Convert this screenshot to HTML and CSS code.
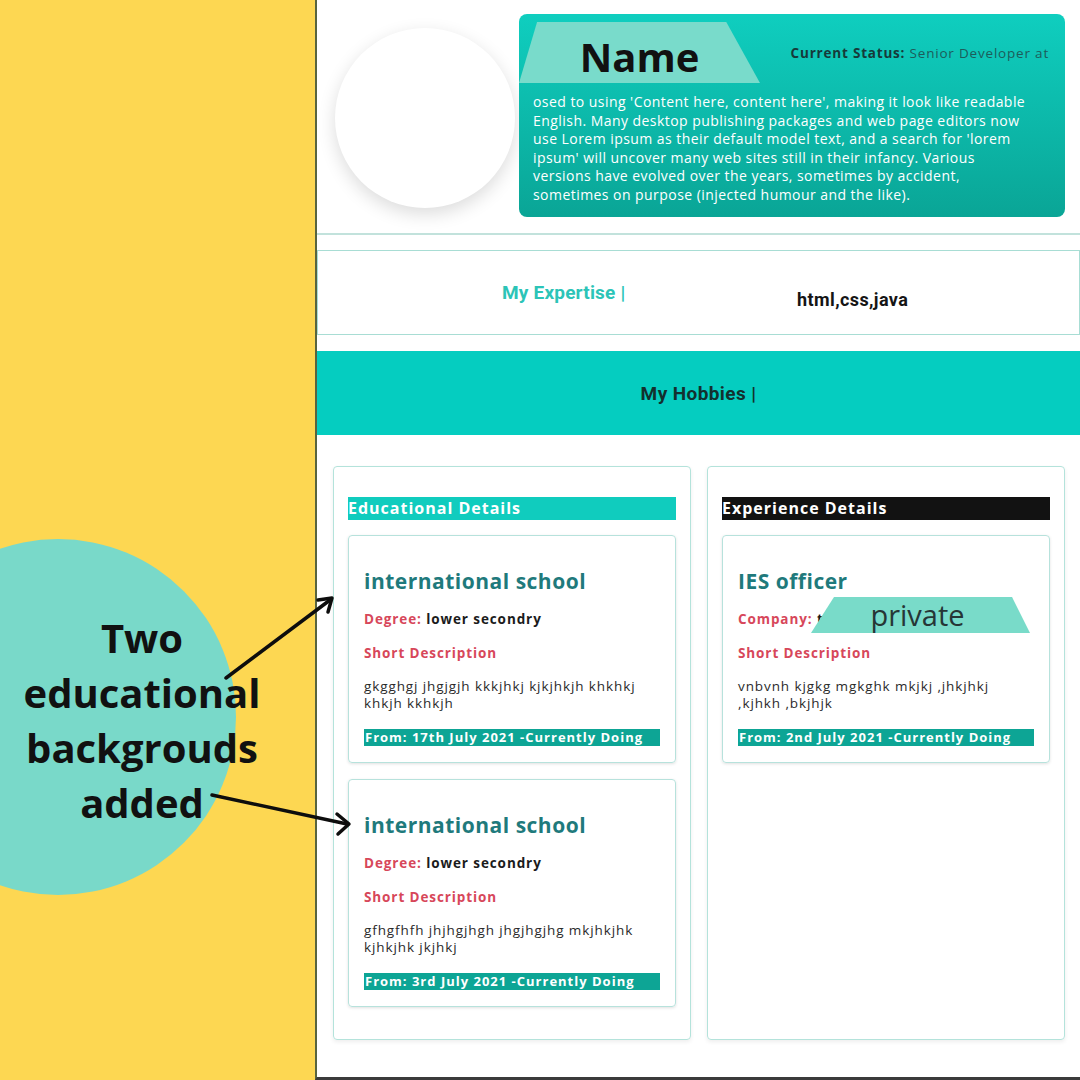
FILE: index.html
```html
<!DOCTYPE html>
<html lang="en">
<head>
<meta charset="utf-8">
<title>Resume</title>
<link rel="stylesheet" href="styles.css">
</head>
<body>
<div class="frame">
  <aside class="side"></aside>
  <main class="page">
    <section class="top">
      <div class="avatar"></div>
      <div class="intro">
        <div class="status-row"><span class="status"><b>Current Status:</b> Senior Developer at</span></div>
        <p class="about">osed to using 'Content here, content here', making it look like readable<br>English. Many desktop publishing packages and web page editors now<br>use Lorem ipsum as their default model text, and a search for 'lorem<br>ipsum' will uncover many web sites still in their infancy. Various<br>versions have evolved over the years, sometimes by accident,<br>sometimes on purpose (injected humour and the like).</p>
        <div class="name-tag">Name</div>
      </div>
    </section>
    <section class="expertise">
      <span class="exp-label">My Expertise |</span>
      <span class="exp-value">html,css,java</span>
    </section>
    <section class="hobbies">My Hobbies |</section>
    <section class="details">
      <div class="col">
        <h2 class="col-head">Educational Details</h2>
        <div class="item">
          <h3 class="item-title">international school</h3>
          <p class="line"><span class="lbl">Degree:</span> <b>lower secondry</b></p>
          <p class="line lbl">Short Description</p>
          <p class="desc">gkgghgj jhgjgjh kkkjhkj kjkjhkjh khkhkj<br>khkjh kkhkjh</p>
          <p class="date">From: 17th July 2021 -Currently Doing</p>
        </div>
        <div class="item item-next">
          <h3 class="item-title">international school</h3>
          <p class="line"><span class="lbl">Degree:</span> <b>lower secondry</b></p>
          <p class="line lbl">Short Description</p>
          <p class="desc">gfhgfhfh jhjhgjhgh jhgjhgjhg mkjhkjhk<br>kjhkjhk jkjhkj</p>
          <p class="date">From: 3rd July 2021 -Currently Doing</p>
        </div>
      </div>
      <div class="col">
        <h2 class="col-head exp-head">Experience Details</h2>
        <div class="item">
          <h3 class="item-title">IES officer</h3>
          <p class="line"><span class="lbl">Company:</span> <b>tcs private</b></p>
          <p class="line lbl">Short Description</p>
          <p class="desc">vnbvnh kjgkg mgkghk mkjkj ,jhkjhkj<br>,kjhkh ,bkjhjk</p>
          <p class="date">From: 2nd July 2021 -Currently Doing</p>
          <div class="private-tag">private</div>
        </div>
      </div>
    </section>
  </main>

  <div class="callout-circle"></div>
  <div class="callout-text">Two<br>educational<br>backgrouds<br>added</div>
  <svg class="arrows" width="1080" height="1080" viewBox="0 0 1080 1080">
    <g fill="none" stroke="#0d0d0d" stroke-width="3.5" stroke-linecap="round" stroke-linejoin="round">
      <line x1="226" y1="678" x2="330" y2="600"/>
      <polyline points="318,600 332,598 328,612"/>
      <line x1="212" y1="795" x2="347" y2="824"/>
      <polyline points="337,814 349,824 338,834"/>
    </g>
  </svg>
</div>
</body>
</html>
```

FILE: styles.css
```css
* { box-sizing: border-box; margin: 0; padding: 0; }

body {
  width: 1080px;
  height: 1080px;
  overflow: hidden;
  background: #ffffff;
  font-family: "Open Sans", "Noto Sans", sans-serif;
  color: #1d1d1d;
}

.frame {
  position: relative;
  display: flex;
  height: 1080px;
}

.side {
  width: 315px;
  flex: none;
  background: #fdd752;
}

.page {
  flex: 1;
  display: flex;
  flex-direction: column;
  border-left: 2px solid #58643f;
  border-bottom: 3px solid #3b3b3b;
  background: #ffffff;
}

/* top */
.top {
  height: 235px;
  flex: none;
  display: flex;
  align-items: flex-start;
  gap: 4px;
  padding: 14px 15px 0 18px;
  border-bottom: 2px solid #c2e2dc;
}

.avatar {
  width: 180px;
  height: 180px;
  flex: none;
  margin-top: 14px;
  border-radius: 50%;
  background: #ffffff;
  box-shadow: 0 6px 18px rgba(0, 0, 0, 0.14);
}

.intro {
  position: relative;
  flex: 1;
  height: 203px;
  border-radius: 8px;
  background: linear-gradient(#0fcebf, #0aa596);
  padding: 30px 10px 0 14px;
  color: #ffffff;
}

.status-row {
  display: flex;
  justify-content: flex-end;
  padding-right: 6px;
  font-size: 13.5px;
  letter-spacing: 0.8px;
  line-height: 18px;
  color: #1d5c5b;
  white-space: nowrap;
}

.status b { color: #163a3a; }

.about {
  margin-top: 31px;
  font-size: 14px;
  letter-spacing: 0.45px;
  line-height: 18.5px;
  white-space: nowrap;
}

.name-tag {
  position: absolute;
  left: 0;
  top: 8px;
  width: 241px;
  height: 61px;
  padding-top: 7px;
  background: #79dbcb;
  clip-path: polygon(7.5% 0, 86% 0, 100% 100%, 0 100%);
  font-size: 40px;
  font-weight: 700;
  letter-spacing: 0;
  line-height: 56px;
  text-align: center;
  color: #111111;
}

/* expertise */
.expertise {
  flex: none;
  height: 85px;
  margin-top: 15px;
  display: flex;
  align-items: flex-start;
  padding-left: 184px;
  border: 1px solid #a8ddd4;
  font-family: Roboto, sans-serif;
  font-weight: 700;
}

.exp-label {
  width: 295px;
  margin-top: 30px;
  font-size: 19px;
  letter-spacing: 0.2px;
  line-height: 24px;
  color: #2cc4b7;
}

.exp-value {
  margin-top: 37px;
  font-size: 18px;
  letter-spacing: 0.4px;
  line-height: 24px;
  color: #151515;
}

/* hobbies */
.hobbies {
  flex: none;
  height: 84px;
  margin-top: 16px;
  display: flex;
  align-items: center;
  justify-content: center;
  background: #05cdc0;
  font-family: Roboto, sans-serif;
  font-weight: 700;
  font-size: 19px;
  letter-spacing: 0.4px;
  color: #13302e;
}

/* details */
.details {
  display: grid;
  grid-template-columns: 358px 358px;
  gap: 16px;
  padding: 31px 15px 0 16px;
}

.col {
  height: 574px;
  border: 1px solid #b4e3db;
  border-radius: 4px;
  padding: 30px 14px 0 14px;
  box-shadow: 0 2px 4px rgba(0, 0, 0, 0.07);
}

.col-head {
  height: 23px;
  line-height: 23px;
  font-size: 16px;
  letter-spacing: 1px;
  font-weight: 700;
  color: #ffffff;
  background: #10ccbe;
  white-space: nowrap;
}

.exp-head { background: #121212; }

.item {
  position: relative;
  margin-top: 15px;
  border: 1px solid #b7e2dc;
  border-radius: 4px;
  padding: 32px 15px 16px 15px;
  box-shadow: 0 1px 3px rgba(0, 0, 0, 0.12);
}

.item-next { margin-top: 16px; }

.item-title {
  font-size: 21px;
  letter-spacing: 0.5px;
  line-height: 26px;
  font-weight: 700;
  color: #1f7a7c;
}

.line {
  margin-top: 16px;
  font-size: 13.5px;
  letter-spacing: 0.9px;
  line-height: 18px;
  white-space: nowrap;
}

.line b { color: #1b1b1b; }

.lbl {
  font-weight: 700;
  color: #d7475a;
}

.desc {
  margin-top: 16px;
  font-size: 13.5px;
  letter-spacing: 0.9px;
  line-height: 17px;
  color: #2a2a2a;
  white-space: nowrap;
}

.date {
  margin-top: 17px;
  height: 17px;
  line-height: 17px;
  padding-left: 1px;
  font-size: 13px;
  letter-spacing: 1px;
  font-weight: 700;
  color: #ffffff;
  background: #0da595;
  white-space: nowrap;
  overflow: hidden;
}

.private-tag {
  position: absolute;
  left: 88px;
  top: 61px;
  width: 219px;
  height: 36px;
  padding-right: 6px;
  background: #79dbc9;
  clip-path: polygon(10.5% 0, 91.8% 0, 100% 100%, 0 100%);
  font-size: 29px;
  letter-spacing: 0;
  line-height: 36px;
  text-align: center;
  color: #263636;
}

/* annotation */
.callout-circle {
  position: absolute;
  left: -120px;
  top: 539px;
  width: 356px;
  height: 356px;
  border-radius: 50%;
  background: #79d9c9;
}

.callout-text {
  position: absolute;
  left: 0;
  top: 610px;
  width: 284px;
  font-size: 40px;
  font-weight: 700;
  line-height: 55px;
  text-align: center;
  color: #111111;
}

.arrows {
  position: absolute;
  left: 0;
  top: 0;
  pointer-events: none;
}
```
